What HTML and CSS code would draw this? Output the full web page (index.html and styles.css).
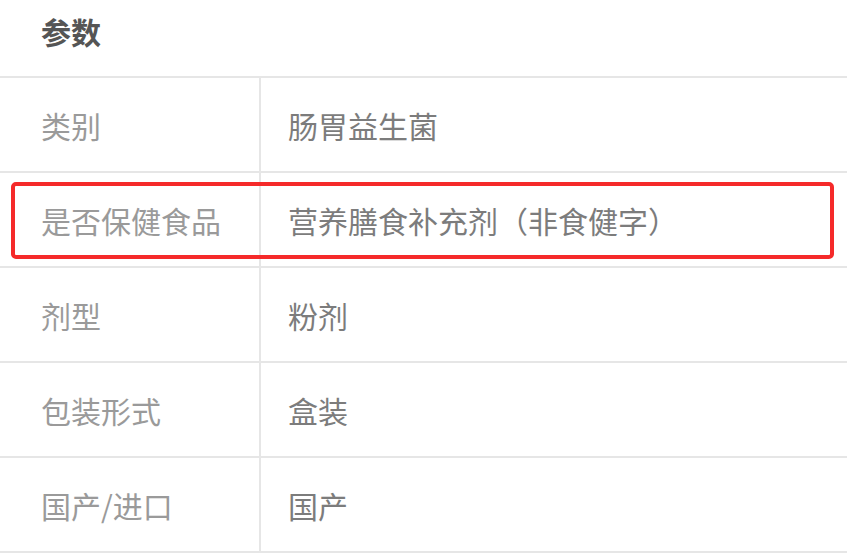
FILE: index.html
```html
<!DOCTYPE html>
<html lang="zh-CN">
<head>
    <meta charset="UTF-8">
    <meta name="viewport" content="width=device-width, initial-scale=1.0">
    <title>参数</title>
    <link rel="stylesheet" href="styles.css">
</head>
<body>
    <div class="params">
        <div class="params-title">参数</div>
        <div class="param-row">
            <div class="param-label">类别</div>
            <div class="param-value">肠胃益生菌</div>
        </div>
        <div class="param-row highlight">
            <div class="param-label">是否保健食品</div>
            <div class="param-value">营养膳食补充剂（非食健字）</div>
        </div>
        <div class="param-row">
            <div class="param-label">剂型</div>
            <div class="param-value">粉剂</div>
        </div>
        <div class="param-row">
            <div class="param-label">包装形式</div>
            <div class="param-value">盒装</div>
        </div>
        <div class="param-row">
            <div class="param-label">国产/进口</div>
            <div class="param-value">国产</div>
        </div>
    </div>
</body>
</html>
```

FILE: styles.css
```css
:root {
    --line: #e6e6e6;
    --title: #555555;
    --label: #9a9a9a;
    --value: #7c7c7c;
    --red: #f52a2a;
}

body {
    margin: 0;
    background-color: #ffffff;
    font-family: "Noto Sans CJK SC", "Noto Sans", sans-serif;
}
.params {
    width: 847px;
}
.params-title {
    display: flex;
    align-items: center;
    height: 78px;
    padding-left: 41px;
    padding-bottom: 14px;
    box-sizing: border-box;
    font-size: 30px;
    font-weight: 700;
    color: var(--title);
    border-bottom: 2px solid var(--line);
}
.param-row {
    position: relative;
    display: grid;
    grid-template-columns: 261px 1fr;
    height: 95px;
    border-bottom: 2px solid var(--line);
    box-sizing: border-box;
    font-size: 30px;
}
.param-label {
    display: flex;
    align-items: center;
    padding-left: 41px;
    color: var(--label);
    border-right: 2px solid var(--line);
}
.param-value {
    display: flex;
    align-items: center;
    padding-left: 27px;
    color: var(--value);
}
/* red highlight frame drawn over the row */
.highlight::after {
    content: "";
    position: absolute;
    top: 9px;
    bottom: 7px;
    left: 11px;
    right: 13px;
    border: 4px solid var(--red);
    border-radius: 5px;
    pointer-events: none;
}
```
